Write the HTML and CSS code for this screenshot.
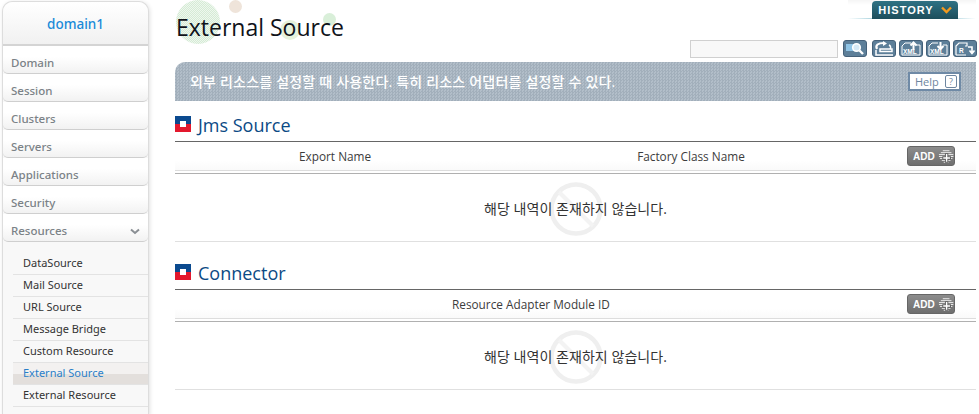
FILE: index.html
```html
<!DOCTYPE html>
<html lang="en">
<head>
    <meta charset="UTF-8">
    <title>External Source</title>
    <link rel="stylesheet" href="styles.css">
</head>
<body>
    <div class="page">
        <!-- Left menu -->
        <nav class="sidebar">
            <div class="server-name">domain1</div>
            <a class="menu-item">Domain</a>
            <a class="menu-item">Session</a>
            <a class="menu-item">Clusters</a>
            <a class="menu-item">Servers</a>
            <a class="menu-item">Applications</a>
            <a class="menu-item">Security</a>
            <a class="menu-item">Resources
                <svg class="chevron" width="10" height="7" viewBox="0 0 10 7"><path d="M1 1.500l4 3.500 4-3.500" fill="none" stroke="#8a8f94" stroke-width="2"/></svg>
            </a>
            <ul class="submenu">
                <li>DataSource</li>
                <li>Mail Source</li>
                <li>URL Source</li>
                <li>Message Bridge</li>
                <li>Custom Resource</li>
                <li class="active">External Source</li>
                <li>External Resource</li>
            </ul>
        </nav>

        <main class="content">
            <div class="history-row">
                <div class="history-tab">HISTORY
                    <svg width="11" height="8" viewBox="0 0 11 8"><path d="M1 1.500l4.500 4.500 4.500-4.500" fill="none" stroke="#f29a1f" stroke-width="2.400"/></svg>
                </div>
            </div>

            <div class="title-row">
                <span class="dot dot-big"></span>
                <span class="dot dot-tan"></span>
                <span class="dot dot-mid"></span>
                <span class="dot dot-small"></span>
                <h1>External Source</h1>
            </div>

            <div class="toolbar">
                <input class="search-box" type="text">
                <button class="tool tool-search">
                    <svg width="20" height="15" viewBox="0 0 20 15"><rect x="1" y="3" width="9" height="7" fill="#8fc4e6"/><circle cx="11.500" cy="6.500" r="3.800" fill="#d6e9f6" stroke="#fff" stroke-width="1.600"/><path d="M14.500 9.500l3.500 3.500" stroke="#fff" stroke-width="2.400"/></svg>
                </button>
                <button class="tool">
                    <svg width="22" height="15" viewBox="0 0 22 15"><path d="M4 8C2 4 5 2 11 2" fill="none" stroke="#fff" stroke-width="2.200"/><path d="M10 0l4 2.500-4 2.500z" fill="#fff"/><path d="M16 4c2 1 2 3 1 4" fill="none" stroke="#fff" stroke-width="1.500"/><path d="M7 8h12v2.500H7zM3 9v5h17" fill="none" stroke="#fff" stroke-width="1.500"/></svg>
                </button>
                <button class="tool">
                    <svg width="22" height="15" viewBox="0 0 22 15"><path d="M2 14V5l3-3h6M16 4h4v10H2" fill="none" stroke="#fff"/><path d="M13.500 9V3M10.500 4.500l3-3 3 3" fill="none" stroke="#fff" stroke-width="2"/><text x="3" y="13" class="xml">XML</text></svg>
                </button>
                <button class="tool">
                    <svg width="22" height="15" viewBox="0 0 22 15"><path d="M2 14V5l3-3h6M16 4h4v10H2" fill="none" stroke="#fff"/><path d="M13.500 1v6M10.500 5l3 3 3-3" fill="none" stroke="#fff" stroke-width="2"/><text x="3" y="13" class="xml">XML</text></svg>
                </button>
                <button class="tool">
                    <svg width="22" height="15" viewBox="0 0 22 15"><path d="M2 14V5l3-3h8v3h-2M2 14h10" fill="none" stroke="#fff" stroke-width="1.200"/><text x="5" y="12" class="xml">R</text><path d="M14 6h4v5M15.500 9.500l2.500 3 2.500-3" fill="none" stroke="#fff" stroke-width="1.600"/></svg>
                </button>
            </div>

            <div class="desc-bar">
                <span>외부 리소스를 설정할 때 사용한다. 특히 리소스 어댑터를 설정할 수 있다.</span>
                <a class="help">Help <i>?</i></a>
            </div>

            <section class="block">
                <h2><span class="square"></span><span class="block-title">Jms Source</span></h2>
                <div class="table-head">
                    <span class="col col-export">Export Name</span>
                    <span class="col col-factory">Factory Class Name</span>
                    <button class="add">ADD
                        <svg width="18" height="15" viewBox="0 0 18 15"><path d="M6 1.500h7M4 3.500h11M2 5.500h15M2 7.500h15M3 9.500h13M5 11.500h9M7 13.500h5" stroke="#eee"/><path d="M10 4v10M5.500 9h9" stroke="#5f5f5f" stroke-width="3.500"/><path d="M10 5v8M6.500 9h7" stroke="#fff" stroke-width="1.500"/></svg>
                    </button>
                </div>
                <div class="empty">
                    <svg class="no-sign" width="54" height="54" viewBox="0 0 54 54"><circle cx="27" cy="27" r="24.500" fill="none" stroke="#efefef" stroke-width="4.500"/><path d="M10 10l34 34" stroke="#f3f3f3" stroke-width="4"/></svg>
                    <span>해당 내역이 존재하지 않습니다.</span>
                </div>
            </section>

            <section class="block block-next">
                <h2><span class="square"></span><span class="block-title">Connector</span></h2>
                <div class="table-head">
                    <span class="col col-module">Resource Adapter Module ID</span>
                    <button class="add">ADD
                        <svg width="18" height="15" viewBox="0 0 18 15"><path d="M6 1.500h7M4 3.500h11M2 5.500h15M2 7.500h15M3 9.500h13M5 11.500h9M7 13.500h5" stroke="#eee"/><path d="M10 4v10M5.500 9h9" stroke="#5f5f5f" stroke-width="3.500"/><path d="M10 5v8M6.500 9h7" stroke="#fff" stroke-width="1.500"/></svg>
                    </button>
                </div>
                <div class="empty">
                    <svg class="no-sign" width="54" height="54" viewBox="0 0 54 54"><circle cx="27" cy="27" r="24.500" fill="none" stroke="#efefef" stroke-width="4.500"/><path d="M10 10l34 34" stroke="#f3f3f3" stroke-width="4"/></svg>
                    <span>해당 내역이 존재하지 않습니다.</span>
                </div>
            </section>
        </main>
    </div>
</body>
</html>
```

FILE: styles.css
```css
html, body {
    margin: 0;
    height: 414px;
    overflow: hidden;
    background: #fff;
}
body {
    font-family: "Open Sans", "Noto Sans CJK KR", sans-serif;
    font-size: 12px;
    color: #333;
}
.page {
    display: flex;
    align-items: flex-start;
}

/* sidebar */
.sidebar {
    width: 145px;
    margin: 1px 0 0 2px;
    height: 413px;
    flex-shrink: 0;
    border: 1px solid #ddd;
    border-bottom: none;
    border-radius: 10px 10px 0 0;
    background: #f8f8f8;
    box-shadow: 1px 1px 4px rgba(0, 0, 0, 0.12);
}
.server-name {
    height: 42px;
    line-height: 45px;
    text-align: center;
    font-family: "Noto Sans", sans-serif;
    font-size: 13.500px;
    font-weight: 500;
    color: #1a8ad8;
    background: linear-gradient(#fff, #f1f1f1);
    border-radius: 10px 10px 0 0;
    border-bottom: 2px solid #d4d4d4;
}
.menu-item {
    display: flex;
    align-items: center;
    justify-content: space-between;
    box-sizing: border-box;
    height: 28px;
    padding: 5px 8px 0 8px;
    font-family: "Noto Sans", sans-serif;
    font-size: 11.500px;
    font-weight: 500;
    color: #7b8287;
    background: linear-gradient(#fff 40%, #f2f2f2);
    border-bottom: 1px solid #cfcfcf;
    border-radius: 0 0 5px 5px;
}
.chevron {
    margin-top: 2px;
}
.submenu {
    list-style: none;
    margin: 0;
    padding: 11px 0 0 10px;
}
.submenu li {
    box-sizing: border-box;
    height: 22px;
    line-height: 20px;
    padding-left: 10px;
    font-family: "Noto Sans", sans-serif;
    font-size: 11px;
    color: #333;
    border-bottom: 1px solid #e3e3e3;
}
.submenu li.active {
    color: #2a7fc9;
    background: linear-gradient(#f3f1f0 50%, #e3dfdc 50%);
}

/* main area */
.content {
    width: 801px;
    margin-left: 26px;
    flex-shrink: 0;
}
.history-row {
    display: flex;
    justify-content: flex-end;
    height: 19px;
    background:
        linear-gradient(90deg, #fff, #a9d3de 20%, #a9d3de 80%, #fff) 0 18px / 100% 1px no-repeat,
        linear-gradient(#f5f5f5, #fff) 0 0 / 100% 5px no-repeat;
    margin-left: 673px;
}
.history-tab {
    display: flex;
    align-items: center;
    justify-content: center;
    gap: 7px;
    width: 86px;
    height: 18px;
    margin: 1px 18px 0 0;
    font-family: "Liberation Sans", sans-serif;
    font-size: 11px;
    font-weight: 700;
    letter-spacing: 1px;
    color: #fff;
    background: linear-gradient(#2f7284, #1d4e5c);
    border-radius: 4px 4px 0 0;
}
.title-row {
    position: relative;
    height: 21px;
}
.title-row h1 {
    position: relative;
    margin: 0;
    padding-left: 1px;
    font-size: 23px;
    font-weight: 400;
    line-height: 16px;
    color: #10131a;
    font-family: "Open Sans", sans-serif;
}
.dot {
    position: absolute;
    border-radius: 50%;
}
.dot-big {
    left: 1px;
    top: -19px;
    width: 44px;
    height: 44px;
    background-color: #fff;
    background-image: conic-gradient(#d5ebd5 25%, #eef7ee 0 50%, #d5ebd5 0 75%, #eef7ee 0);
    background-size: 2px 2px;
}
.dot-tan {
    left: 54px;
    top: -19px;
    width: 13px;
    height: 13px;
    background: #efe4da;
}
.dot-mid {
    left: 105px;
    top: 1px;
    width: 20px;
    height: 20px;
    background: #e6f2dc;
}
.dot-small {
    left: 148px;
    top: -6px;
    width: 13px;
    height: 13px;
    background: #d9efd9;
}
.toolbar {
    display: flex;
    align-items: center;
    justify-content: flex-end;
    height: 18px;
    margin: 0 -1px 0 0;
    gap: 3px;
}
.search-box {
    box-sizing: border-box;
    width: 148px;
    height: 18px;
    margin-right: 2px;
    padding: 0;
    background: #f8f8f8;
    border: 1px solid #d0d0d0;
}
.tool {
    display: flex;
    align-items: center;
    justify-content: center;
    width: 24px;
    height: 17px;
    padding: 0;
    margin-bottom: 1px;
    border: 1px solid #45617a;
    border-radius: 3px;
    background: #5d7f99;
}
.tool-search {
    margin-right: 2px;
}
.xml {
    font-family: "Liberation Sans", sans-serif;
    font-size: 6.500px;
    font-weight: 700;
    fill: #fff;
}
.desc-bar {
    display: flex;
    align-items: center;
    justify-content: space-between;
    box-sizing: border-box;
    height: 39px;
    margin-top: 4px;
    padding: 0 15px;
    font-size: 14px;
    font-weight: 500;
    color: #fff;
    background-color: #aab7c2;
    background-image: conic-gradient(#a2afbb 25%, #b2bec9 0 50%, #a2afbb 0 75%, #b2bec9 0);
    background-size: 3px 3px;
    border-radius: 10px 0 0 0;
}
.desc-bar span {
    margin-top: -2px;
    letter-spacing: 0.200px;
}
.help {
    display: flex;
    align-items: center;
    justify-content: space-between;
    box-sizing: border-box;
    width: 53px;
    height: 19px;
    padding: 0 2px 0 5px;
    font-size: 11px;
    color: #6e86a0;
    background: #fff;
    border: 2px solid #6f8aa6;
}
.help i {
    width: 10px;
    height: 11px;
    line-height: 11px;
    font-style: normal;
    font-size: 9px;
    text-align: center;
    border: 1px solid #6e86a0;
    border-radius: 2px;
}
.block h2 {
    display: flex;
    align-items: center;
    gap: 7px;
    box-sizing: border-box;
    height: 40px;
    margin: 0;
    padding-top: 6px;
    font-size: 18px;
    font-weight: 400;
    color: #0b4a85;
    font-family: "Open Sans", sans-serif;
}
.block-title {
    margin-top: 2px;
}
.block-next {
    margin-top: 7px;
}
.square {
    position: relative;
    width: 16px;
    height: 16px;
    background: linear-gradient(#0b4a8f 50%, #e3182d 50%);
}
.square::after {
    content: "";
    position: absolute;
    left: 5px;
    top: 5px;
    width: 6px;
    height: 6px;
    background: #fff;
}
.table-head {
    position: relative;
    display: flex;
    align-items: center;
    box-sizing: border-box;
    height: 33px;
    padding-bottom: 3px;
    border-top: 1px solid #666;
    border-bottom: 1px solid #b0b0b0;
    background: linear-gradient(#fff 60%, #f8f8f8);
    font-size: 11.800px;
    color: #3c3c3c;
}
.table-head::after {
    content: "";
    position: absolute;
    left: 0;
    right: 0;
    bottom: 0;
    height: 2px;
    background: #fff;
    border-top: 1px solid #ddd;
}
.col-export {
    margin-left: 124px;
}
.col-factory {
    margin-left: 266px;
}
.col-module {
    margin-left: 277px;
}
.add {
    position: absolute;
    left: 732px;
    top: 4px;
    display: flex;
    align-items: center;
    gap: 2px;
    box-sizing: border-box;
    width: 48px;
    height: 20px;
    padding: 0 0 0 5px;
    font-family: "Liberation Sans", sans-serif;
    font-size: 10px;
    font-weight: 700;
    color: #fff;
    background: linear-gradient(#8c8c8c, #6e6e6e);
    border: 1px solid #666;
    border-radius: 3px;
}
.empty {
    position: relative;
    display: flex;
    align-items: center;
    justify-content: center;
    box-sizing: border-box;
    height: 68px;
    border-bottom: 1px solid #e0e0e0;
    font-size: 14px;
    letter-spacing: 0.050px;
    color: #333;
}
.empty span {
    position: relative;
}
.no-sign {
    position: absolute;
    left: 374px;
    top: 8px;
}
```
